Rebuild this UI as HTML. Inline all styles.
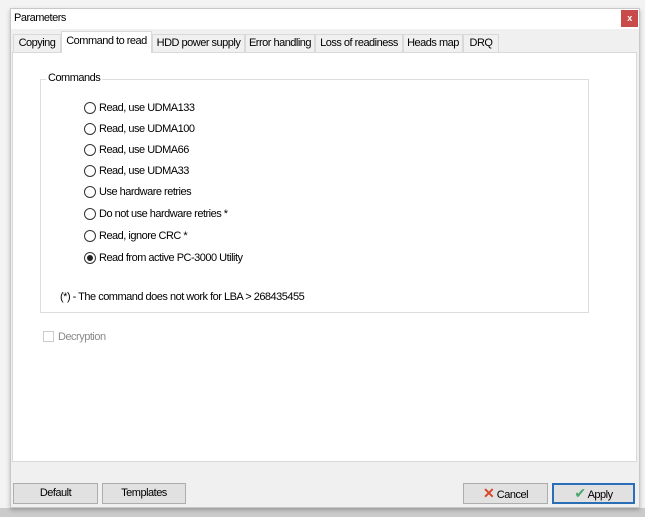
<!DOCTYPE html>
<html><head><style>
body{margin:0;width:645px;height:517px;background:#f3f3f3;position:relative;overflow:hidden;font-family:"Liberation Sans",sans-serif;font-size:11px;letter-spacing:-0.5px;color:#000}
.a{position:absolute;white-space:nowrap}
.win{left:10px;top:8px;width:630px;height:500px;background:#f0f0f0;border:1px solid #c8c8c8;box-sizing:border-box;box-shadow:0 2px 4px rgba(0,0,0,.25)}
.tab{position:absolute;top:34px;height:18px;line-height:17px;background:#f0f0f0;border:1px solid #d9d9d9;border-bottom:none;box-sizing:border-box;text-align:center;white-space:nowrap;overflow:hidden}
.sel{top:31px;height:22px;background:#fff;z-index:2;line-height:19px}
.r{position:absolute;left:84px;height:14px;line-height:12px}
.r i{position:absolute;left:0;top:0;width:12px;height:12px;border:1px solid #333;border-radius:50%;background:#fff;box-sizing:border-box}
.r span{position:absolute;left:15px;white-space:nowrap;top:0}
.btn{position:absolute;top:483px;height:21px;border:1px solid #adadad;background:#e1e1e1;box-sizing:border-box;text-align:center;line-height:19px;white-space:nowrap}
</style></head><body>
<div class="a" style="left:0;top:508px;width:645px;height:9px;background:#cbcbcb"></div>
<div class="a win"></div>
<div class="a" style="left:11px;top:9px;width:628px;height:20px;background:#fff"></div>
<div class="a" style="left:14px;top:12px">Parameters</div>
<div class="a" style="left:621px;top:10px;width:17px;height:17px;background:#c94a4a;color:#fff;font-size:9px;text-align:center;line-height:16px;font-weight:bold">x</div>
<div class="tab" style="left:13px;width:48px">Copying</div>
<div class="tab sel" style="left:61px;width:91px">Command to read</div>
<div class="tab" style="left:152px;width:93px">HDD power supply</div>
<div class="tab" style="left:245px;width:70px">Error handling</div>
<div class="tab" style="left:315px;width:88px">Loss of readiness</div>
<div class="tab" style="left:403px;width:60px">Heads map</div>
<div class="tab" style="left:463px;width:36px">DRQ</div>
<div class="a" style="left:12px;top:52px;width:625px;height:410px;background:#fff;border:1px solid #d9d9d9;box-sizing:border-box"></div>
<div class="a" style="left:40px;top:79px;width:549px;height:234px;border:1px solid #dcdcdc;box-sizing:border-box"></div>
<div class="a" style="left:46px;top:72px;background:#fff;padding:0 2px">Commands</div>
<div class="r" style="top:102px"><i></i><span>Read, use UDMA133</span></div>
<div class="r" style="top:123px"><i></i><span>Read, use UDMA100</span></div>
<div class="r" style="top:144px"><i></i><span>Read, use UDMA66</span></div>
<div class="r" style="top:165px"><i></i><span>Read, use UDMA33</span></div>
<div class="r" style="top:186px"><i></i><span>Use hardware retries</span></div>
<div class="r" style="top:208px"><i></i><span>Do not use hardware retries *</span></div>
<div class="r" style="top:230px"><i></i><span>Read, ignore CRC *</span></div>
<div class="r" style="top:252px"><i><b style="position:absolute;left:2px;top:2px;width:6px;height:6px;border-radius:50%;background:#222"></b></i><span>Read from active PC-3000 Utility</span></div>
<div class="a" style="left:60px;top:291px">(*) - The command does not work for LBA &gt; 268435455</div>
<div class="a" style="left:43px;top:331px;width:11px;height:11px;border:1px solid #ccc;box-sizing:border-box"></div>
<div class="a" style="left:58px;top:331px;color:#8a8a8a">Decryption</div>
<div class="btn" style="left:13px;width:85px">Default</div>
<div class="btn" style="left:102px;width:84px">Templates</div>
<div class="btn" style="left:463px;width:85px"><span style="color:#d9452b;font-size:14px;font-weight:bold">✕</span> Cancel</div>
<div class="btn" style="left:552px;width:83px;border:2px solid #2a6fb5;line-height:17px"><span style="color:#4aa56a;font-size:14px">✔</span> Apply</div>
</body></html>
